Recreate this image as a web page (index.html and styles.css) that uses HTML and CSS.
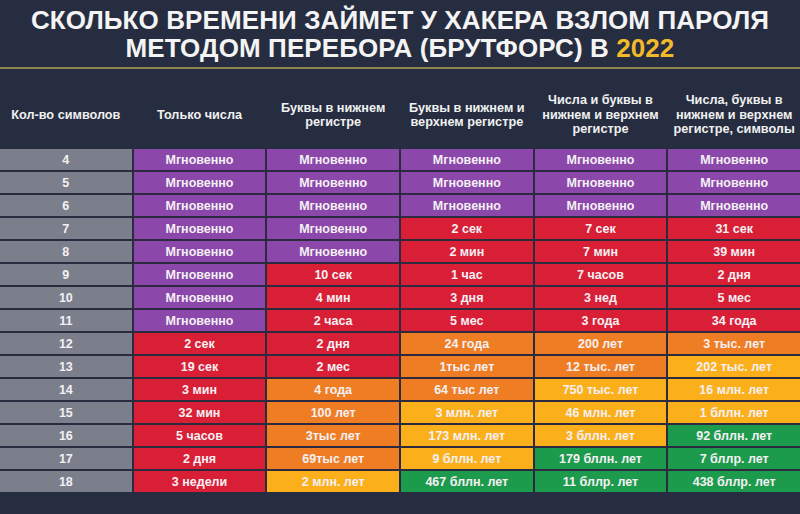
FILE: index.html
```html
<!DOCTYPE html>
<html lang="ru">
<head>
<meta charset="utf-8">
<link rel="stylesheet" href="styles.css">
</head>
<body>
<div class="page">
  <h1 class="title">СКОЛЬКО ВРЕМЕНИ ЗАЙМЕТ У ХАКЕРА ВЗЛОМ ПАРОЛЯ<br>МЕТОДОМ ПЕРЕБОРА (БРУТФОРС) В <span class="year">2022</span></h1>
  <div class="rule"></div>
  <div class="head">
    <div>Кол-во символов</div>
    <div>Только числа</div>
    <div>Буквы в нижнем<br>регистре</div>
    <div>Буквы в нижнем и<br>верхнем регистре</div>
    <div>Числа и буквы в<br>нижнем и верхнем<br>регистре</div>
    <div>Числа, буквы в<br>нижнем и верхнем<br>регистре, символы</div>
  </div>
  <div class="grid">
    <div class="c g">4</div><div class="c p">Мгновенно</div><div class="c p">Мгновенно</div><div class="c p">Мгновенно</div><div class="c p">Мгновенно</div><div class="c p">Мгновенно</div>
    <div class="c g">5</div><div class="c p">Мгновенно</div><div class="c p">Мгновенно</div><div class="c p">Мгновенно</div><div class="c p">Мгновенно</div><div class="c p">Мгновенно</div>
    <div class="c g">6</div><div class="c p">Мгновенно</div><div class="c p">Мгновенно</div><div class="c p">Мгновенно</div><div class="c p">Мгновенно</div><div class="c p">Мгновенно</div>
    <div class="c g">7</div><div class="c p">Мгновенно</div><div class="c p">Мгновенно</div><div class="c r">2 сек</div><div class="c r">7 сек</div><div class="c r">31 сек</div>
    <div class="c g">8</div><div class="c p">Мгновенно</div><div class="c p">Мгновенно</div><div class="c r">2 мин</div><div class="c r">7 мин</div><div class="c r">39 мин</div>
    <div class="c g">9</div><div class="c p">Мгновенно</div><div class="c r">10 сек</div><div class="c r">1 час</div><div class="c r">7 часов</div><div class="c r">2 дня</div>
    <div class="c g">10</div><div class="c p">Мгновенно</div><div class="c r">4 мин</div><div class="c r">3 дня</div><div class="c r">3 нед</div><div class="c r">5 мес</div>
    <div class="c g">11</div><div class="c p">Мгновенно</div><div class="c r">2 часа</div><div class="c r">5 мес</div><div class="c r">3 года</div><div class="c r">34 года</div>
    <div class="c g">12</div><div class="c r">2 сек</div><div class="c r">2 дня</div><div class="c o">24 года</div><div class="c o">200 лет</div><div class="c o">3 тыс. лет</div>
    <div class="c g">13</div><div class="c r">19 сек</div><div class="c r">2 мес</div><div class="c o">1тыс лет</div><div class="c o">12 тыс. лет</div><div class="c y">202 тыс. лет</div>
    <div class="c g">14</div><div class="c r">3 мин</div><div class="c o">4 года</div><div class="c o">64 тыс лет</div><div class="c y">750 тыс. лет</div><div class="c y">16 млн. лет</div>
    <div class="c g">15</div><div class="c r">32 мин</div><div class="c o">100 лет</div><div class="c y">3 млн. лет</div><div class="c y">46 млн. лет</div><div class="c y">1 бллн. лет</div>
    <div class="c g">16</div><div class="c r">5 часов</div><div class="c o">3тыс лет</div><div class="c y">173 млн. лет</div><div class="c y">3 бллн. лет</div><div class="c gr">92 бллн. лет</div>
    <div class="c g">17</div><div class="c r">2 дня</div><div class="c o">69тыс лет</div><div class="c y">9 бллн. лет</div><div class="c gr">179 бллн. лет</div><div class="c gr">7 бллр. лет</div>
    <div class="c g">18</div><div class="c r">3 недели</div><div class="c y">2 млн. лет</div><div class="c gr">467 бллн. лет</div><div class="c gr">11 бллр. лет</div><div class="c gr">438 бллр. лет</div>
  </div>
</div>
</body>
</html>
```
FILE: styles.css
```css
* { box-sizing: border-box; }
html, body { margin: 0; padding: 0; }
body {
  background: #272d40;
  font-family: "Liberation Sans", Arial, sans-serif;
  color: #ffffff;
  width: 800px;
  height: 514px;
  overflow: hidden;
}
.page { padding-top: 6px; }
.title {
  margin: 0;
  text-align: center;
  font-size: 26px;
  line-height: 28px;
  font-weight: bold;
  letter-spacing: 0.1px;
  color: #f4f4f4;
}
.year { color: #f2b92a; }
.rule {
  margin-top: 5px;
  height: 2px;
  background: #8f8650;
}
.head {
  display: grid;
  grid-template-columns: repeat(6, 1fr);
  column-gap: 2px;
  height: 80px;
  padding-top: 12px;
  align-items: center;
  text-align: center;
  font-size: 12.7px;
  line-height: 14.5px;
  font-weight: bold;
  color: #f0f0f0;
}
.grid {
  display: grid;
  grid-template-columns: repeat(6, 1fr);
  grid-auto-rows: 21px;
  gap: 2px;
  background: #2b2a3f;
}
.c {
  display: flex;
  align-items: center;
  justify-content: center;
  font-size: 12.5px;
  font-weight: bold;
  color: #f4f0f4;
}
.g { background: #7b7f8b; }
.p { background: #8b47a9; }
.r { background: #d91f36; }
.o { background: #ef7d23; }
.y { background: #fbaf1b; }
.gr { background: #1d9b4c; }
```
